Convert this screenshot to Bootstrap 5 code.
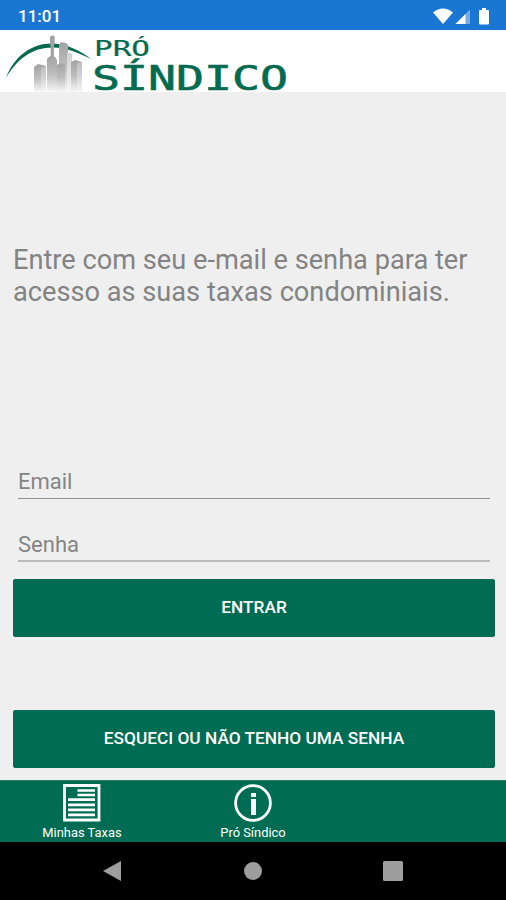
<!DOCTYPE html>
<html lang="pt-BR">
<head>
<meta charset="utf-8">
<meta name="viewport" content="width=device-width, initial-scale=1">
<title>Pró Síndico</title>
<link rel="stylesheet" href="https://cdn.jsdelivr.net/npm/bootstrap@5.3.0/dist/css/bootstrap.min.css">
<style>
  body { font-family: Roboto, "Liberation Sans", sans-serif; background: #efefef; height: 900px; overflow: hidden; }
  svg { display: block; overflow: visible; }
  .status-bar { height: 30px; background: #1976d2; padding: 3px 16px 0 18px; font-size: 17px; font-weight: 500; }
  .brand-bar { height: 62px; }
  .brand-word { font-family: "DejaVu Sans Mono", monospace; fill: #056b50; }
  .intro { margin: 152px 0 0; padding-left: 13px; font-size: 27.2px; line-height: 32px; color: #838383; white-space: nowrap; }
  .login { padding: 0 11px 0 13px; margin-top: 156px; }
  .line-input, .line-input:focus { height: 35px; margin: 0 5px; width: auto; padding: 1px 0 1px; border: 0; border-bottom: 1px solid #8c8c8c; border-radius: 0; background: transparent; box-shadow: none; font-size: 22px; line-height: 32px; }
  .line-input::placeholder { color: #858585; opacity: 1; }
  .line-soft, .line-soft:focus { margin-top: 28px; padding: 2px 0 0; border-bottom: 2px solid #bcbcbc; }
  .btn-brand { --bs-btn-color: #fff; --bs-btn-bg: #006c53; --bs-btn-border-color: #006c53; --bs-btn-hover-bg: #005f49; --bs-btn-hover-color: #fff; height: 58px; border-radius: 2px; font-size: 17.3px; font-weight: 500; padding: 0; }
  .btn-enter { margin-top: 17px; }
  .btn-forgot { margin-top: 73px; }
  .tab-bar { height: 62px; background: #006c53; border-top: 1px solid #2b8069; }
  .tab-row { margin-left: -3.5px; }
  .tab-item { width: 171px; padding-top: 3px; font-size: 12.9px; line-height: 16px; gap: 3px; }
  .system-bar { height: 58px; padding: 0 103px 0 102px; }
</style>
<script src="https://cdn.jsdelivr.net/npm/bootstrap@5.3.0/dist/js/bootstrap.bundle.min.js"></script>
</head>
<body class="d-flex flex-column">
  <div class="status-bar d-flex align-items-center justify-content-between text-white flex-shrink-0">
    <span>11:01</span>
    <svg width="58" height="20" viewBox="432 5.500 58 20" fill="#fff" aria-hidden="true">
      <path d="M433 11Q443 3 453 11L443 22.500Z"/>
      <path d="M455.500 22.500L470 8V22.500Z" opacity=".4"/>
      <path d="M455.500 22.500L465.500 12.500V22.500Z"/>
      <path d="M482 6.500h4v2h2q1 0 1 1v12.500q0 1-1 1h-8q-1 0-1-1v-12.500q0-1 1-1h2z"/>
    </svg>
  </div>

  <header class="brand-bar bg-white flex-shrink-0">
    <svg width="300" height="62" viewBox="0 30 300 62" role="img" aria-label="Pró Síndico">
      <defs>
        <linearGradient id="tower" x1="0" y1="0" x2="0" y2="1">
          <stop offset="0" stop-color="#a2a2a2"/><stop offset=".5" stop-color="#bdbdbd"/><stop offset="1" stop-color="#f4f4f4"/>
        </linearGradient>
        <linearGradient id="side" x1="0" y1="0" x2="0" y2="1">
          <stop offset="0" stop-color="#cfcfcf"/><stop offset="1" stop-color="#f6f6f6"/>
        </linearGradient>
      </defs>
      <path d="M6 78C14 56 32 43 53 43.500C67 44 81 51 91 59C79 53 66 47.500 53 47.500C32 47.500 17 59 6 78Z" fill="#056b50"/>
      <path d="M50 36.500l2.500-1.200 2.200 1.200v7.500l-.8 2v13h-3.200v-13l-.7-2z" fill="#a2a2a2"/>
      <path d="M59 45l2-3 5 1 2 2v46.500h-9z" fill="url(#tower)"/>
      <path d="M67 52l5 2v37.500h-5z" fill="url(#side)"/>
      <path d="M47 59l3-3 5 1 2 3v31.500h-10z" fill="url(#tower)"/>
      <path d="M57 65l3-2 5 2v26.500h-8z" fill="url(#tower)"/>
      <path d="M34 67l4-3 8 2v25.500H34z" fill="url(#tower)"/>
      <path d="M41 68l5-2v25.500h-5z" fill="url(#side)" opacity=".6"/>
      <path d="M71 62l4-2 7 2v29.500H71z" fill="url(#tower)"/>
      <path d="M77 63l5-1v29.500h-5z" fill="url(#side)" opacity=".6"/>
      <text class="brand-word" x="94" y="55.500" font-size="20.500" textLength="56" lengthAdjust="spacingAndGlyphs" stroke="#056b50" stroke-width=".2">PRÓ</text>
      <text class="brand-word" x="92" y="89.500" font-size="33.500" textLength="196" lengthAdjust="spacingAndGlyphs" stroke="#056b50" stroke-width=".6">SÍNDICO</text>
    </svg>
  </header>

  <main class="flex-grow-1 d-flex flex-column">
    <p class="intro">Entre com seu e-mail e senha para ter<br>acesso as suas taxas condominiais.</p>
    <form class="login d-flex flex-column">
      <input type="email" class="form-control line-input" placeholder="Email" aria-label="Email">
      <input type="password" class="form-control line-input line-soft" placeholder="Senha" aria-label="Senha">
      <button type="button" class="btn btn-brand btn-enter w-100">ENTRAR</button>
      <button type="button" class="btn btn-brand btn-forgot w-100">ESQUECI OU NÃO TENHO UMA SENHA</button>
    </form>
  </main>

  <nav class="tab-bar flex-shrink-0">
    <div class="tab-row d-flex">
      <a href="#" class="tab-item d-flex flex-column align-items-center text-white text-decoration-none">
        <svg width="38" height="38" viewBox="0 0 38 38" aria-hidden="true">
          <path d="M1.500 1.500h34.500v34.500H1.500z" fill="none" stroke="#fff" stroke-width="2.800"/>
          <path d="M14.500 6.500H32M14.500 11H32M5 15.700H32M5 20.800H32M5 25.800H32M5 30.800H32" stroke="#fff" stroke-width="2.700"/>
        </svg>
        <span>Minhas Taxas</span>
      </a>
      <a href="#" class="tab-item d-flex flex-column align-items-center text-white text-decoration-none">
        <svg width="38" height="38" viewBox="0 0 38 38" aria-hidden="true">
          <circle cx="19" cy="19" r="17.400" fill="none" stroke="#fff" stroke-width="2.800"/>
          <path d="M17 9h5v4h-5zM17 15h5v16h-5z" fill="#fff"/>
        </svg>
        <span>Pró Síndico</span>
      </a>
    </div>
  </nav>

  <div class="system-bar bg-black d-flex align-items-center justify-content-between flex-shrink-0">
    <svg width="20" height="22" viewBox="0 0 20 22" aria-hidden="true"><path d="M1 11L19 1v20z" fill="#9e9e9e"/></svg>
    <svg width="20" height="20" viewBox="0 0 20 20" aria-hidden="true"><circle cx="10" cy="10" r="9" fill="#9e9e9e"/></svg>
    <svg width="20" height="20" viewBox="0 0 20 20" aria-hidden="true"><rect width="20" height="20" rx="1.500" fill="#9e9e9e"/></svg>
  </div>
</body>
</html>
